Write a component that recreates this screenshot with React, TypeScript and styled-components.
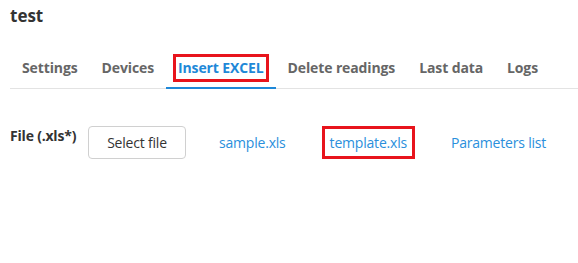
import React, { useState } from "react";
import styled, { createGlobalStyle } from "styled-components";

const GlobalStyle = createGlobalStyle`
  html, body {
    margin: 0;
    padding: 0;
    background: #fff;
    font-family: "Open Sans", "DejaVu Sans", sans-serif;
  }
`;

const Page = styled.div`
  padding: 4px 0 0 10px;
`;

const Title = styled.h1`
  margin: 0;
  font-size: 17px;
  font-weight: 700;
  color: #333;
  line-height: 24px;
`;

const TabBar = styled.div`
  display: flex;
  margin-top: 24px;
  border-bottom: 1px solid #e3e3e3;
`;

const Tab = styled.div<{ $active?: boolean }>`
  position: relative;
  padding: 0 12px 4px;
  height: 32px;
  display: flex;
  align-items: center;
  font-size: 14px;
  letter-spacing: -0.12px;
  font-weight: 700;
  color: ${(p) => (p.$active ? "#1e88d8" : "#666")};
  cursor: pointer;
  &::after {
    content: "";
    position: absolute;
    left: 0;
    right: 0;
    bottom: -1px;
    height: 2px;
    background: ${(p) => (p.$active ? "#1e88d8" : "transparent")};
  }
`;

const Marked = styled.span<{ $on?: boolean }>`
  display: inline-block;
  line-height: 20px;
  padding: 1px 2px;
  margin: 0 -5px;
  border: 3px solid ${(p) => (p.$on ? "#e8141c" : "transparent")};
`;

const FileRow = styled.div`
  display: flex;
  align-items: flex-start;
  margin-top: 37px;
`;

const Label = styled.div`
  font-size: 14px;
  font-weight: 700;
  letter-spacing: -0.2px;
  color: #333;
  width: 78px;
  line-height: 20px;
`;

const Button = styled.button`
  width: 98px;
  height: 33px;
  border: 1px solid #d0d0d0;
  border-radius: 4px;
  background: #fff;
  font-family: inherit;
  font-size: 14px;
  letter-spacing: -0.2px;
  color: #333;
  cursor: pointer;
`;

const Links = styled.div`
  display: flex;
  align-items: center;
  height: 33px;
  margin-left: 33px;
  gap: 44px;
`;

const Link = styled.a<{ $marked?: boolean }>`
  font-size: 14px;
  letter-spacing: -0.2px;
  color: #2a8fdc;
  text-decoration: none;
  cursor: pointer;
  padding: ${(p) => (p.$marked ? "4px 5px" : "0")};
  margin: ${(p) => (p.$marked ? "0 -8px" : "0")};
  border: ${(p) => (p.$marked ? "3px solid #e8141c" : "none")};
`;

const tabs = ["Settings", "Devices", "Insert EXCEL", "Delete readings", "Last data", "Logs"];

export default function App() {
  const [active, setActive] = useState(2);
  return (
    <>
      <GlobalStyle />
      <Page>
        <Title>test</Title>
        <TabBar>
          {tabs.map((t, i) => (
            <Tab key={t} $active={i === active} onClick={() => setActive(i)}>
              <Marked $on={i === 2}>{t}</Marked>
            </Tab>
          ))}
        </TabBar>
        <FileRow>
          <Label>File (.xls*)</Label>
          <Button>Select file</Button>
          <Links>
            <Link>sample.xls</Link>
            <Link $marked>template.xls</Link>
            <Link>Parameters list</Link>
          </Links>
        </FileRow>
      </Page>
    </>
  );
}
